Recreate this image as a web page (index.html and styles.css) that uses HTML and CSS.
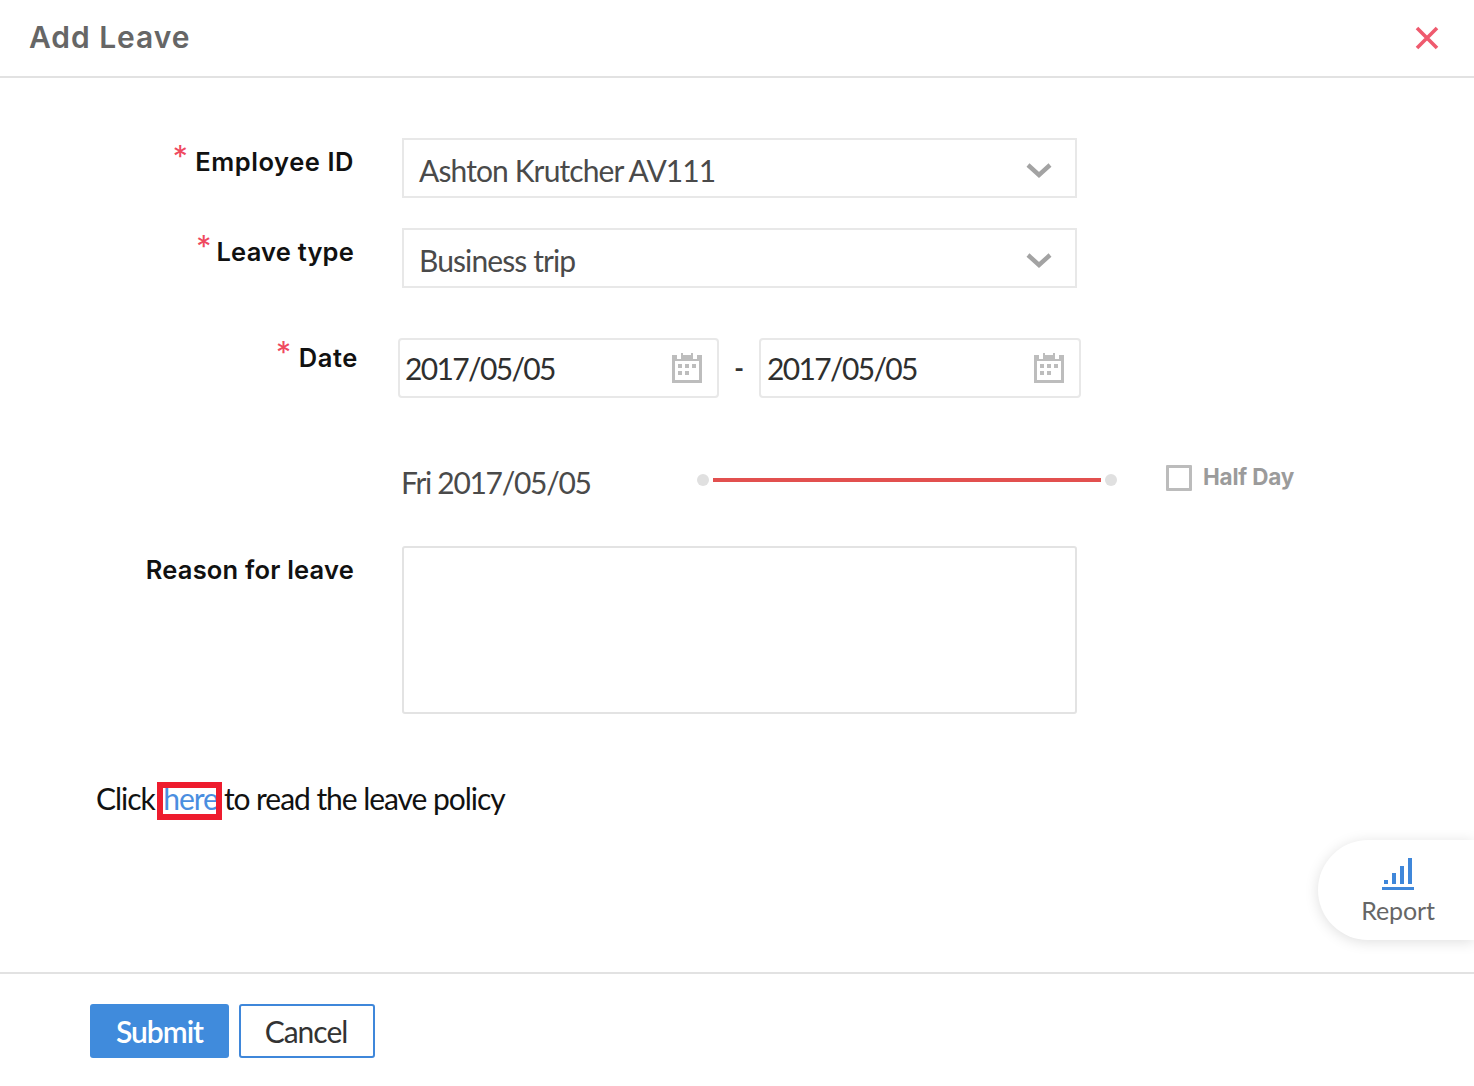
FILE: index.html
```html
<!DOCTYPE html>
<html lang="en">
<head>
<meta charset="utf-8">
<title>Add Leave</title>
<link rel="stylesheet" href="styles.css">
</head>
<body>
<div class="page">
  <header class="header">
    <h1 class="title">Add Leave</h1>
    <svg class="close" width="24" height="24" viewBox="0 0 24 24"><path d="M2 2 L22 22 M22 2 L2 22" stroke="#ef5a6e" stroke-width="3.6" fill="none"/></svg>
  </header>
  <main class="main">
    <div class="row row-emp">
      <label class="label label-emp"><span class="req">*</span>Employee ID</label>
      <div class="select">Ashton Krutcher AV111
        <svg class="chev" width="26" height="16" viewBox="0 0 26 16"><path d="M2 3 L13 13 L24 3" stroke="#a3a3a3" stroke-width="4.4" fill="none"/></svg>
      </div>
    </div>
    <div class="row row-type">
      <label class="label"><span class="req req-type">*</span>Leave type</label>
      <div class="select">Business trip
        <svg class="chev" width="26" height="16" viewBox="0 0 26 16"><path d="M2 3 L13 13 L24 3" stroke="#a3a3a3" stroke-width="4.4" fill="none"/></svg>
      </div>
    </div>
    <div class="row row-date">
      <label class="label label-date"><span class="req">*</span>Date</label>
      <div class="dates">
        <div class="date date-from">2017/05/05
          <svg class="cal" width="30" height="30" viewBox="0 0 30 30"><path fill="#bdbdbd" fill-rule="evenodd" d="M0 2h5v4h4V0h2v2h8V0h2v6h4V2h5v28H0zM3 8v19h24V8z"/><path fill="#bdbdbd" d="M6 11h4v4H6zM13 11h4v4h-4zM20 11h4v4h-4zM6 18h4v4H6zM13 18h4v4h-4z"/></svg>
        </div>
        <span class="dash">-</span>
        <div class="date date-to">2017/05/05
          <svg class="cal" width="30" height="30" viewBox="0 0 30 30"><path fill="#bdbdbd" fill-rule="evenodd" d="M0 2h5v4h4V0h2v2h8V0h2v6h4V2h5v28H0zM3 8v19h24V8z"/><path fill="#bdbdbd" d="M6 11h4v4H6zM13 11h4v4h-4zM20 11h4v4h-4zM6 18h4v4H6zM13 18h4v4h-4z"/></svg>
        </div>
      </div>
    </div>
    <div class="row row-day">
      <span class="day">Fri 2017/05/05</span>
      <div class="slider">
        <span class="dot"></span>
        <span class="bar"></span>
        <span class="dot"></span>
      </div>
      <div class="half">
        <span class="check"></span>
        <span class="half-text">Half Day</span>
      </div>
    </div>
    <div class="row row-reason">
      <label class="label">Reason for leave</label>
      <div class="textarea"></div>
    </div>
    <p class="policy">Click <a class="here">here</a> to read the leave policy</p>
    <div class="report">
      <svg width="32" height="32" viewBox="0 0 32 32"><path fill="#3f87da" d="M2 22h4v4H2zM10 15h4v11h-4zM18 8h4v18h-4zM26 0h4v26h-4zM0 29h32v3H0z"/></svg>
      <span class="report-text">Report</span>
    </div>
  </main>
  <footer class="footer">
    <button class="btn btn-primary">Submit</button>
    <button class="btn btn-secondary">Cancel</button>
  </footer>
</div>
</body>
</html>
```
FILE: styles.css
```css
* { box-sizing: border-box; }
html, body { margin: 0; padding: 0; background: #fff; }
body { font-family: Lato, "Noto Sans", sans-serif; color: #333; overflow: hidden; }
.page { width: 1474px; height: 1086px; display: flex; flex-direction: column; }
.header { height: 78px; flex: none; border-bottom: 2px solid #e2e2e2; display: flex; align-items: center; justify-content: space-between; padding: 0 35px 2px 29px; }
.title { margin: 0; font-family: Inter, sans-serif; font-weight: 600; font-size: 30px; letter-spacing: 0.95px; color: #666; }
.close { margin-top: 1px; }
.main { flex: 1; position: relative; padding-top: 60px; }
.row { display: flex; align-items: flex-start; }
.label { width: 354px; flex: none; margin-right: 48px; text-align: right; font-family: Inter, sans-serif; font-weight: 600; font-size: 25.5px; letter-spacing: 0.2px; line-height: 30px; color: #111; padding-top: 9px; }
.label-emp { letter-spacing: 0.55px; }
.req { color: #ef4a5f; font-size: 30px; line-height: 0; font-weight: 400; margin-right: 7px; position: relative; top: -4px; }
.req-type { margin-right: 5px; }
.select { position: relative; width: 675px; height: 60px; border: 2px solid #e8e8e8; padding-left: 15px; font-size: 30px; letter-spacing: -0.9px; line-height: 61px; color: #4a4a4a; }
.chev { position: absolute; right: 23px; top: 22px; }
.row-type { margin-top: 30px; }
.row-date { margin-top: 50px; }
.label-date { width: 358px; margin-right: 40px; padding-top: 5px; letter-spacing: 0.6px; }
.dates { display: flex; align-items: center; }
.date { position: relative; height: 60px; border: 2px solid #e8e8e8; border-radius: 4px; padding-left: 6px; font-size: 30px; letter-spacing: -1.65px; line-height: 56px; color: #2f2f2f; }
.date-from { width: 321px; padding-left: 5px; }
.date-to { width: 322px; }
.cal { position: absolute; right: 15px; top: 13px; }
.dash { width: 40px; text-align: center; font-size: 26px; font-weight: 700; color: #333; }
.row-day { margin-top: 61px; padding-left: 401px; height: 48px; align-items: center; }
.day { width: 296px; flex: none; font-size: 30px; letter-spacing: -1.3px; line-height: 44px; color: #4a4a4a; margin-top: -2px; }
.slider { display: flex; align-items: center; width: 420px; flex: none; margin-top: -6px; }
.dot { width: 12px; height: 12px; border-radius: 50%; background: #e0e0e0; flex: none; }
.bar { width: 388px; height: 4px; background: #e2504f; margin: 0 4px; flex: none; }
.half { display: flex; align-items: center; margin-left: 49px; margin-top: -14px; }
.check { width: 26px; height: 26px; border: 3px solid #bcbcbc; border-radius: 1px; flex: none; margin-right: 11px; position: relative; top: 2px; }
.half-text { font-family: Inter, sans-serif; font-weight: 700; font-size: 22.5px; letter-spacing: -0.2px; color: #9b9b9b; }
.row-reason { margin-top: 39px; }
.textarea { width: 675px; height: 168px; border: 2px solid #e3e3e3; border-radius: 3px; }
.policy { margin: 64px 0 0 96px; font-size: 30px; letter-spacing: -1.05px; line-height: 40px; color: #111; white-space: nowrap; }
.here { display: inline-block; color: #4a8ee0; outline: 6px solid #ee1c2e; line-height: 21px; padding-bottom: 5px; width: 53px; margin: 0 1px 0 2px; }
.report { position: absolute; right: 0; top: 762px; width: 156px; height: 100px; background: #fff; border-radius: 50px 0 0 50px; box-shadow: 0 2px 14px rgba(0,0,0,.13); display: flex; flex-direction: column; align-items: center; padding: 18px 0 0 4px; }
.report svg { display: block; }
.report-text { font-size: 25px; letter-spacing: -0.1px; line-height: 30px; color: #666; margin-top: 5px; }
.footer { height: 114px; flex: none; border-top: 2px solid #e2e2e2; padding: 30px 0 0 90px; display: flex; align-items: flex-start; gap: 10px; }
.btn { height: 54px; border-radius: 3px; font-family: Lato, sans-serif; font-size: 30px; letter-spacing: -1px; padding: 0; }
.btn-primary { width: 139px; background: #408bdc; border: none; color: #fff; font-weight: 600; }
.btn-secondary { width: 136px; background: #fff; border: 2px solid #3f87da; color: #333; padding-right: 2px; }
```
